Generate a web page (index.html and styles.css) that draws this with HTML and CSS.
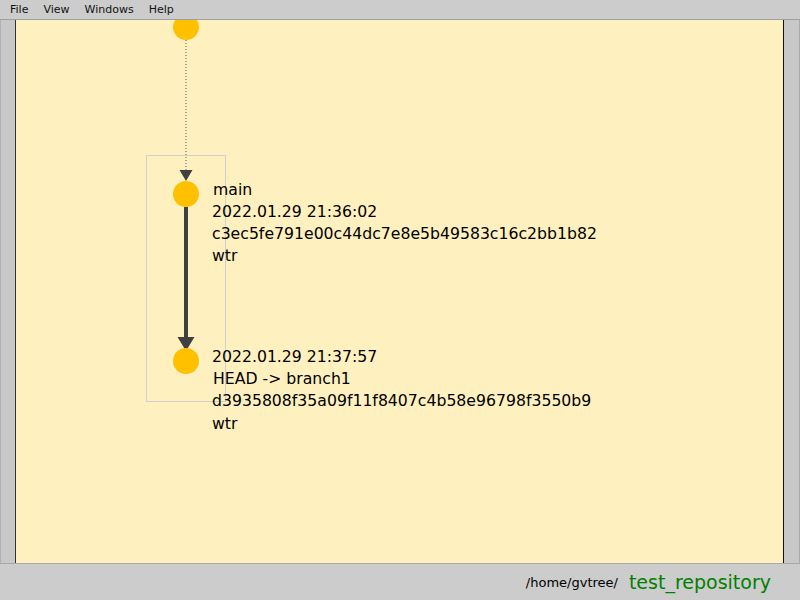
FILE: index.html
```html
<!DOCTYPE html>
<html>
<head>
<meta charset="utf-8">
<link rel="stylesheet" href="styles.css">
</head>
<body>
<div class="app">
  <div class="menubar">
    <span class="menu-item">File</span>
    <span class="menu-item">View</span>
    <span class="menu-item">Windows</span>
    <span class="menu-item">Help</span>
  </div>
  <div class="middle">
    <div class="side side-left"></div>
    <div class="canvas">
      <svg class="graph" width="766" height="543" viewBox="0 0 766 543">
        <rect class="sel-box" x="130.5" y="135.5" width="79" height="246"/>
        <line class="dotted" x1="170" y1="20" x2="170" y2="150"/>
        <polygon class="arrow" points="163.5,150 176.5,150 170,161"/>
        <line class="solid" x1="170" y1="187" x2="170" y2="320"/>
        <polygon class="arrow" points="161.5,317 178.5,317 170,331"/>
        <circle class="node" cx="170" cy="7" r="13"/>
        <circle class="node" cx="170" cy="174" r="13"/>
        <circle class="node" cx="170" cy="341" r="13"/>
        <text class="label" x="197" y="174.5">main</text>
        <text class="label" x="196" y="197">2022.01.29 21:36:02</text>
        <text class="label" x="196" y="219">c3ec5fe791e00c44dc7e8e5b49583c16c2bb1b82</text>
        <text class="label" x="196" y="241">wtr</text>
        <text class="label" x="196" y="342">2022.01.29 21:37:57</text>
        <text class="label" x="197" y="364">HEAD -&gt; branch1</text>
        <text class="label" x="196" y="386">d3935808f35a09f11f8407c4b58e96798f3550b9</text>
        <text class="label" x="196" y="409">wtr</text>
      </svg>
    </div>
    <div class="side side-right"></div>
  </div>
  <div class="statusbar">
    <span class="path">/home/gvtree/</span>
    <span class="repo">test_repository</span>
  </div>
</div>
</body>
</html>
```
FILE: styles.css
```css
html, body {
  margin: 0;
  padding: 0;
}
body {
  font-family: "DejaVu Sans", sans-serif;
  background: #cccccc;
}
.app {
  width: 800px;
  height: 600px;
  display: flex;
  flex-direction: column;
  overflow: hidden;
}
.menubar {
  height: 19px;
  border-bottom: 1px solid #a0a0a0;
  background: #cccccc;
  display: flex;
  align-items: center;
  padding-left: 10px;
  gap: 15px;
  font-size: 11px;
  color: #111;
  box-sizing: content-box;
}
.menu-item {
  line-height: 19px;
}
.middle {
  height: 543px;
  display: flex;
}
.side {
  background: #c8c8c8;
}
.side-left {
  width: 16px;
  box-sizing: border-box;
  border-left: 1px solid #b0b0b0;
  border-right: 1px solid #333;
}
.side-right {
  width: 17px;
  box-sizing: border-box;
  border-left: 1px solid #111;
  border-right: 1px solid #a8a8a8;
}
.canvas {
  width: 767px;
  background: #fff0c0;
  overflow: hidden;
}
.graph {
  display: block;
}
.sel-box {
  fill: none;
  stroke: #cfcfcf;
  stroke-width: 1;
}
.dotted {
  stroke: #606060;
  stroke-width: 1;
  stroke-dasharray: 1 2;
}
.solid {
  stroke: #404040;
  stroke-width: 4;
}
.arrow {
  fill: #404040;
}
.node {
  fill: #ffc000;
}
.label {
  font-family: "DejaVu Sans", sans-serif;
  font-size: 15.7px;
  fill: #000;
}
.statusbar {
  height: 36px;
  border-top: 1px solid #a8a8a8;
  background: #cccccc;
  display: flex;
  justify-content: flex-end;
  align-items: center;
  padding-right: 29px;
  gap: 11px;
}
.path {
  font-size: 13px;
  color: #000;
}
.repo {
  font-size: 19px;
  color: #008000;
}
```
